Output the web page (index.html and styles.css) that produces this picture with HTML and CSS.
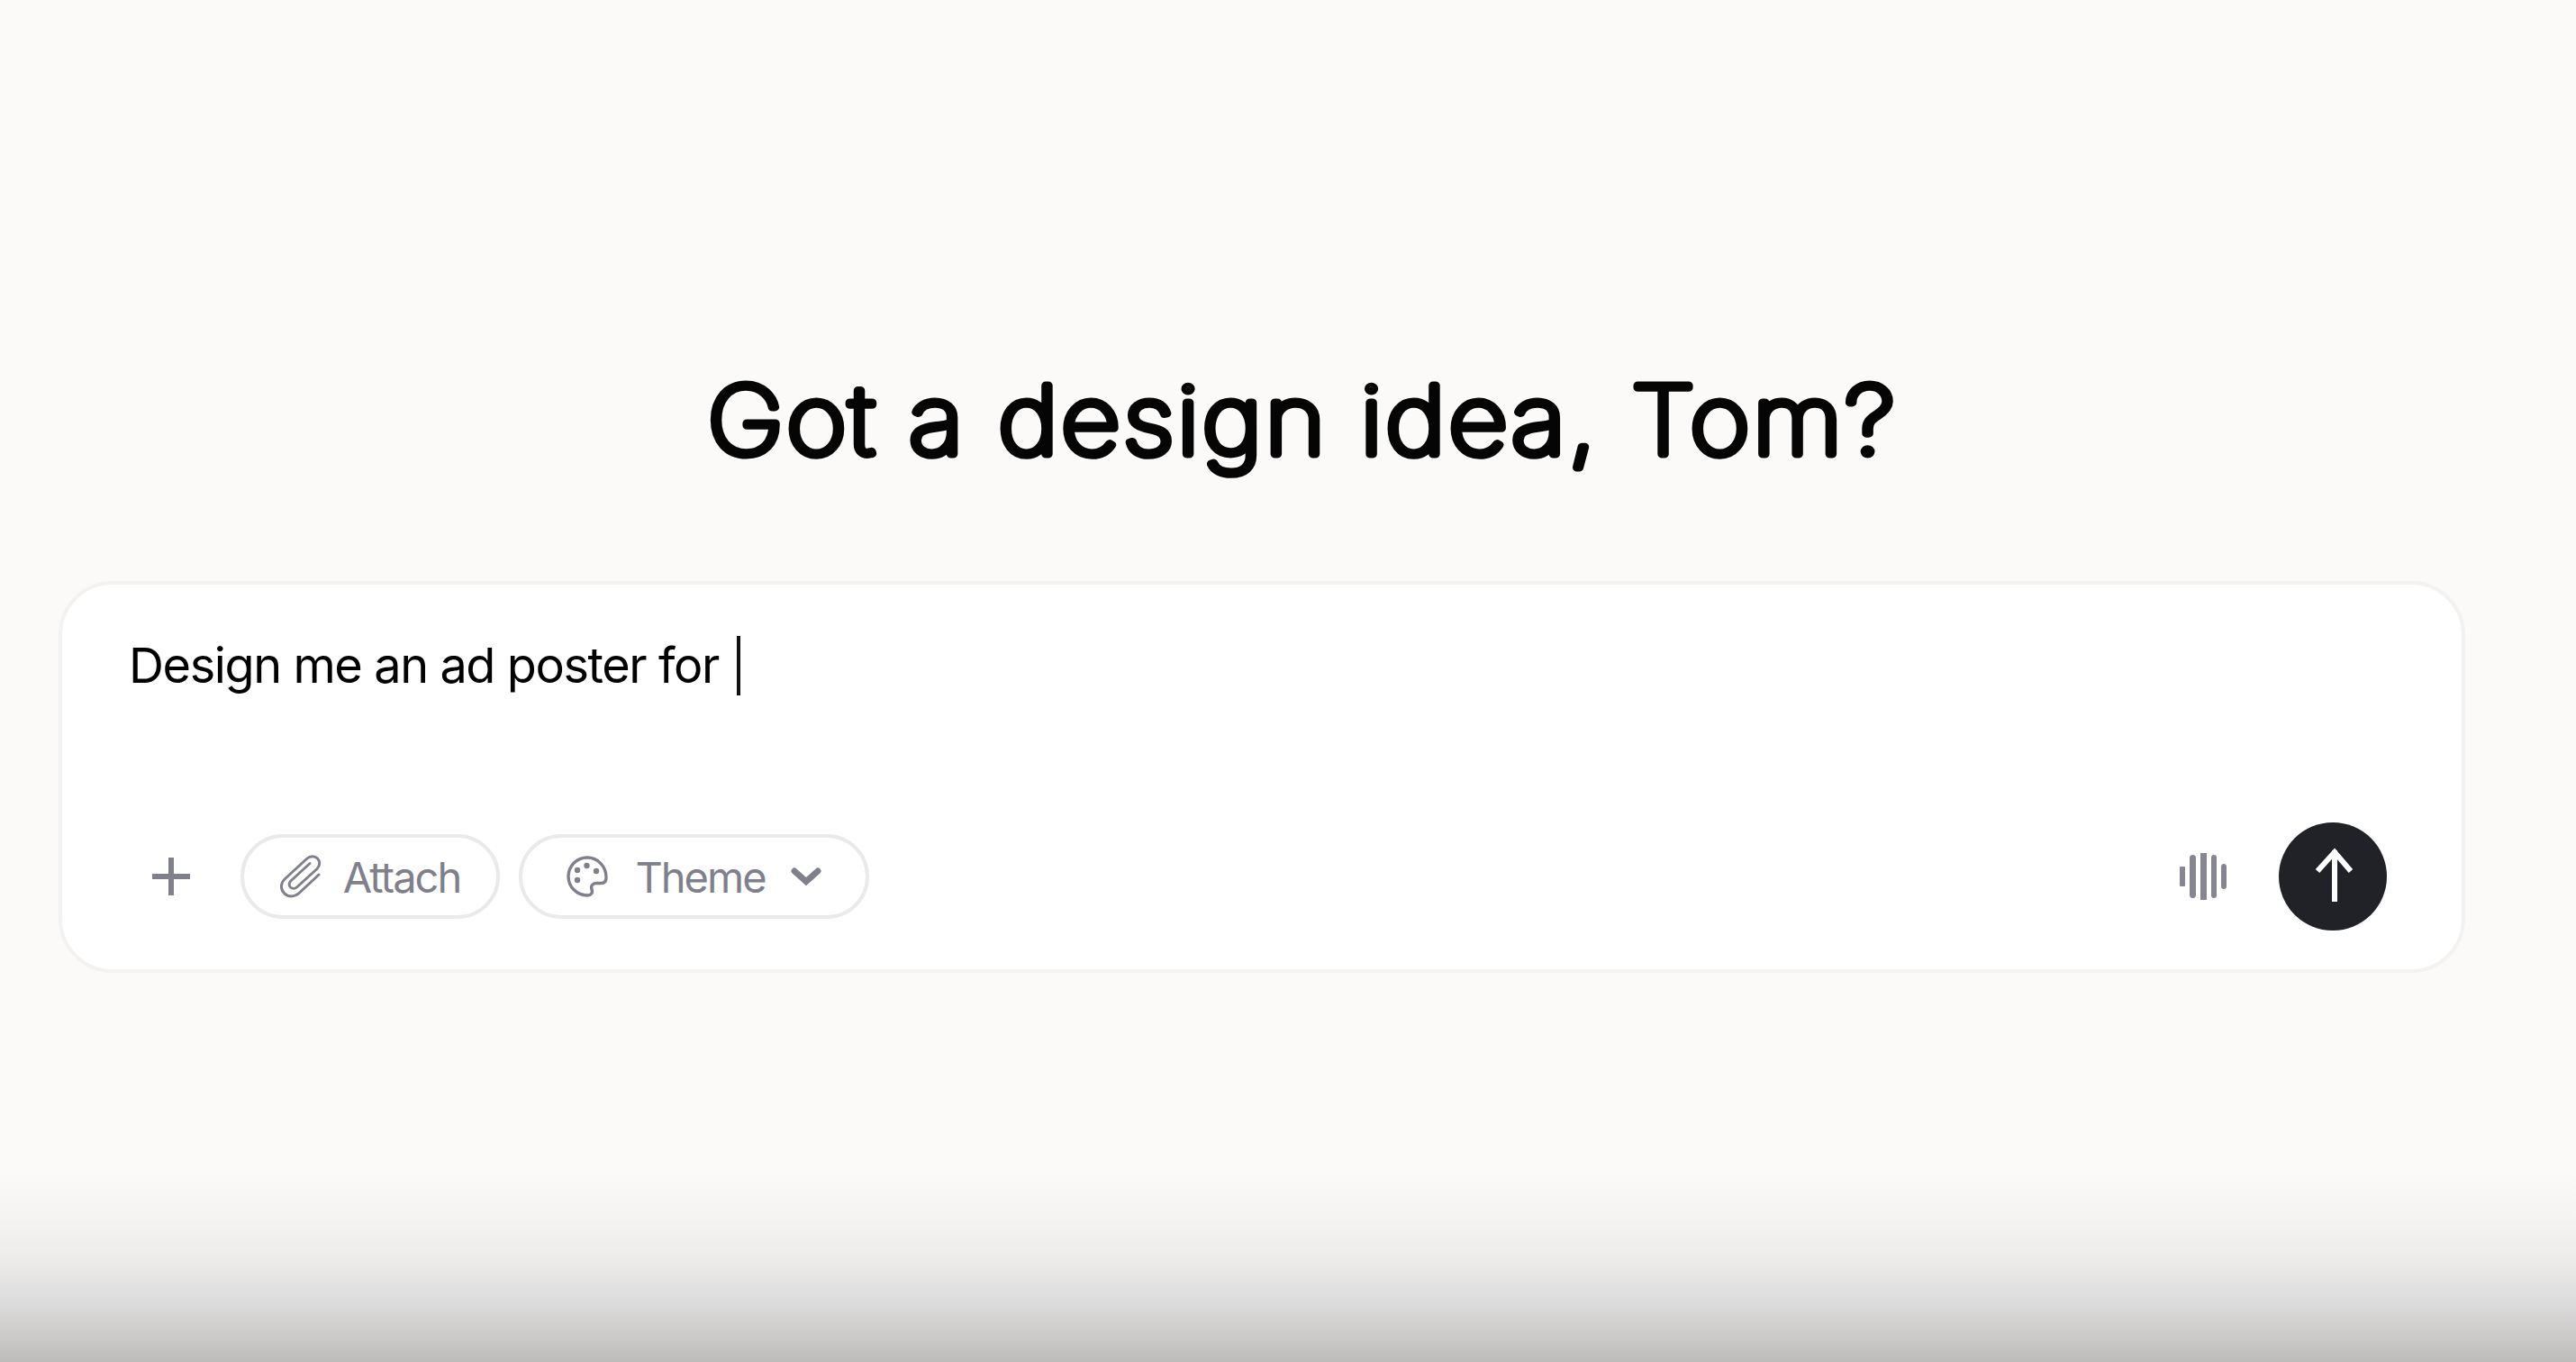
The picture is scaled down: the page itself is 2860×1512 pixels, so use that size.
FILE: index.html
```html
<!doctype html>
<html>
 <head>
  <meta charset="UTF-8">
  <title>Design prompt</title>
  <link rel="stylesheet" href="styles.css">
 </head>
 <body>
  <h1 class="headline">
	<svg width="2672" height="645"><text x="1381" y="504" textLength="1321" lengthAdjust="spacingAndGlyphs">Got a design idea, Tom?</text></svg>
  </h1>
  <div class="composer">
	<div class="prompt">Design me an ad poster for <span class="caret"></span></div>
	<div class="toolbar">
	  <button class="plus">
		<svg width="44" height="44" viewBox="0 0 44 44"><path d="M22 1V43M1 22H43" stroke="#7f808b" stroke-width="6" fill="none"/></svg>
	  </button>
	  <button class="pill attach">
		<svg width="46" height="48" viewBox="0 0 46 48" fill="none" stroke="#7f808b" stroke-width="3" stroke-linecap="round" stroke-linejoin="round"><path d="M43 22 21 42.500C16 47 8.500 47 4.500 42.500 0 38 0.500 31 5 27L30 4C33.500 0.800 38.500 1 41.500 4 44.500 7 44.500 12 41 15.500L18.500 36C16.500 37.800 13.500 37.800 11.500 36 9.500 34 9.800 31 11.800 29L33 9.500"/></svg>
		<span>Attach</span>
	  </button>
	  <button class="pill theme">
		<svg width="46" height="46" viewBox="0 0 46 46" fill="none"><path d="M23 2C11 2 2 11.500 2 23 2 34.500 11.500 44 23 44 27.500 44 29.500 41 28 37.500 26.500 33.500 29 30.500 33 30.500H38.500C42 30.500 44 28 44 24 44 11.500 34.500 2 23 2Z" stroke="#7f808b" stroke-width="3.400"/><circle cx="22.500" cy="11" r="3.200" fill="#7f808b"/><circle cx="12" cy="16" r="3.200" fill="#7f808b"/><circle cx="33" cy="17" r="3.200" fill="#7f808b"/><circle cx="12" cy="27" r="3.200" fill="#7f808b"/></svg>
		<span>Theme</span>
		<svg class="chevron" width="34" height="22" viewBox="0 0 34 22"><path d="M4 5 17 16.500 30 5" stroke="#7f808b" stroke-width="7" stroke-linecap="round" stroke-linejoin="miter" fill="none"/></svg>
	  </button>
	  <div class="spacer"></div>
	  <div class="wave">
		<i class="b1"></i><i class="b2"></i><i class="b3"></i><i class="b4"></i><i class="b5"></i>
	  </div>
	  <button class="send">
		<svg width="44" height="66" viewBox="0 0 44 66" fill="none" stroke="#fff" stroke-width="6"><path d="M24 4V61M5 27 24 6 42 27"/></svg>
	  </button>
	</div>
  </div>
 </body>
</html>
```

FILE: styles.css
```css
*{
	margin:0;
	padding:0;
	box-sizing:border-box;
}
html,body{
	height:100%;
}
body{
	background:linear-gradient(to bottom,#fbfaf8 0,#fbfaf8 1300px,#f5f4f3 1350px,#ecebea 1400px,#dbdada 1450px,#bdbcbb 1512px);
	font-family:"Inter","Liberation Sans",sans-serif;
	padding:0 123px 0 65px;
	overflow:hidden;
}
.headline{
	height:645px;
}
.headline svg{
	display:block;
}
.headline text{
	font-family:"Inter",sans-serif;
	font-weight:100;
	font-size:104px;
	letter-spacing:3px;
	text-anchor:middle;
	fill:#050505;
	stroke:#050505;
	stroke-width:9px;
	stroke-linejoin:round;
	stroke-linecap:round;
}
.composer{
	height:435px;
	background:#fff;
	border:4px solid #f3f2f0;
	border-radius:60px;
	padding:0 83px 0 74px;
	display:flex;
	flex-direction:column;
}
.prompt{
	font-size:54px;
	line-height:66px;
	letter-spacing:-1.4px;
	color:#000;
	padding-top:57px;
	height:264px;
	display:flex;
	align-items:flex-start;
	white-space:pre;
}
.caret{
	display:inline-block;
	width:4px;
	height:66px;
	margin-left:6px;
	background:#111;
}
.toolbar{
	display:flex;
	align-items:center;
	height:120px;
}
button{
	background:none;
	border:0;
	font:inherit;
	display:flex;
	align-items:center;
	justify-content:center;
}
.plus{
	width:44px;
	margin:0 55px 0 25px;
}
.pill{
	height:94px;
	border:4px solid #eaeaed;
	border-radius:47px;
	font-size:47px;
	letter-spacing:-2px;
	color:#7f808b;
}
.attach{
	width:288px;
	margin-right:21px;
}
.attach svg{
	margin-right:24px;
}
.theme{
	width:389px;
}
.theme svg{
	margin-right:30px;
}
.theme .chevron{
	margin:0 0 0 28px;
}
.spacer{
	flex:1;
}
.wave{
	display:flex;
	align-items:center;
	gap:5px;
	margin-right:58px;
}
.wave i{
	display:block;
	width:6px;
	background:#858692;
	border-radius:2px;
}
.wave .b1{height:22px;border-radius:1px;}
.wave .b2{height:48px;width:7px;border-radius:4px;}
.wave .b3{height:52px;width:7px;border-radius:0;}
.wave .b4{height:48px;border-radius:4px;}
.wave .b5{height:28px;border-radius:4px;}
.send{
	width:120px;
	height:120px;
	border-radius:50%;
	background:#212227;
}
```
